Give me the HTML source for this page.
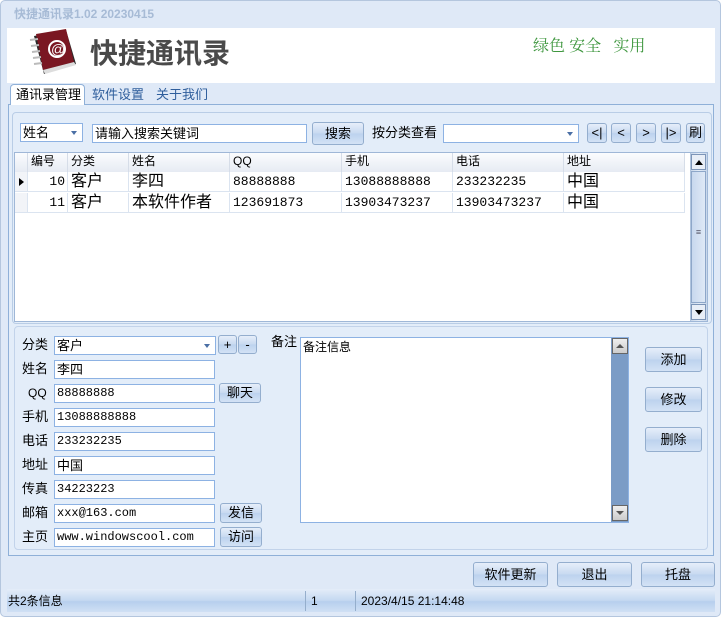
<!DOCTYPE html><html><head><meta charset="utf-8"><style>
*{box-sizing:border-box;margin:0;padding:0}
body{width:722px;height:619px;background:#fff;font-family:"Liberation Sans","Noto Sans CJK SC",sans-serif;font-size:12px;color:#000;position:relative;overflow:hidden}
.a{position:absolute}
.win{left:0;top:0;width:721px;height:617px;background:#dfe9f7;border:1px solid #b4c6de;border-radius:5px}
.inp{position:absolute;background:#fff;border:1px solid #8db2e3;height:19px;font-family:"Liberation Mono","Noto Sans CJK SC",monospace;font-size:12px;line-height:17px;padding-left:2px;white-space:nowrap;overflow:hidden}
.btn{position:absolute;border:1px solid #94aece;border-radius:3px;background:linear-gradient(#e6eefa,#c7d9f0 50%,#bcd2ee 51%,#d3e2f5);text-align:center;font-size:13px;white-space:nowrap}
.lbl{position:absolute;font-size:13px;line-height:16px;white-space:nowrap}
.dd{position:absolute;right:5px;top:7px;width:0;height:0;border-left:3px solid transparent;border-right:3px solid transparent;border-top:4px solid #4a6fa5}
.grid{left:14px;top:152px;width:694px;height:170px;background:#fff;border:1px solid #9fb7d7}
.hc{position:absolute;top:0;height:19px;background:linear-gradient(#fbfcfe,#e6ebf3);border-right:1px solid #d6dde8;font-size:12px;line-height:17px;padding-left:3px}
.c{position:absolute;height:20px;border-right:1px solid #dbe4f0;border-bottom:1px solid #dbe4f0;font-size:16px;line-height:19px;padding-left:3px;white-space:nowrap}
.m{font-family:"Liberation Mono",monospace;font-size:13px}
</style></head><body>
<div class="a win"></div>
<div class="a" style="left:14px;top:5px;font-size:12px;font-weight:bold;color:#a7bbd6">快捷通讯录1.02 20230415</div>
<div class="a" style="left:7px;top:28px;width:708px;height:55px;background:#fff"></div>
<svg class="a" style="left:24px;top:28px" width="58" height="52" viewBox="0 0 58 52">
<path d="M10 8 L42 2 L52 36 L20 46 Z" fill="#2a2a2a"/>
<path d="M12 6 L42 1 L50 34 L19 42 Z" fill="#7a1722"/>
<path d="M19 42 L50 34 L52 37 L21 46 Z" fill="#ddd"/>
<circle cx="33" cy="21" r="8" fill="none" stroke="#fff" stroke-width="2"/><text x="27" y="26" font-size="14" fill="#fff" font-family="Liberation Sans">@</text>
<g stroke="#bbb" stroke-width="2"><line x1="6" y1="12" x2="14" y2="11"/><line x1="7" y1="18" x2="15" y2="17"/><line x1="8" y1="24" x2="16" y2="23"/><line x1="9" y1="30" x2="17" y2="29"/><line x1="10" y1="36" x2="18" y2="35"/></g>
</svg>
<div class="a" style="left:90px;top:36px;font-size:28px;line-height:36px;font-weight:bold;color:#4a4a4a">快捷通讯录</div>
<div class="a" style="left:533px;top:34px;font-size:16px;line-height:22px;color:#3f973f;font-family:'Noto Serif CJK SC',serif;white-space:pre">绿色 安全   实用</div>
<!-- tabs -->
<div class="a" style="left:8px;top:104px;width:706px;height:452px;border:1px solid #8fb0d8;background:#e3edf9"></div>
<div class="a" style="left:10px;top:84px;width:75px;height:21px;background:#fff;border:1px solid #8fb0d8;border-bottom:none;border-radius:4px 4px 0 0;font-size:13px;line-height:16px;padding:2px 0 0 5px">通讯录管理</div>
<div class="lbl" style="left:92px;top:87px;color:#2f5e9c">软件设置</div>
<div class="lbl" style="left:156px;top:87px;color:#2f5e9c">关于我们</div>
<div class="a" style="left:12px;top:112px;width:700px;height:212px;border:1px solid #b9cde6;border-radius:4px"></div>
<div class="inp" style="left:20px;top:123px;width:63px;font-family:'Liberation Sans','Noto Sans CJK SC';font-size:13px">姓名<div class="dd"></div></div>
<div class="inp" style="left:92px;top:124px;width:215px;font-family:'Liberation Sans','Noto Sans CJK SC';font-size:13px">请输入搜索关键词</div>
<div class="btn" style="left:312px;top:122px;width:52px;height:23px;line-height:21px">搜索</div>
<div class="lbl" style="left:372px;top:125px">按分类查看</div>
<div class="inp" style="left:443px;top:124px;width:136px"><div class="dd"></div></div>
<div class="btn" style="left:587px;top:123px;width:20px;height:20px;line-height:18px">&lt;|</div>
<div class="btn" style="left:611px;top:123px;width:20px;height:20px;line-height:18px">&lt;</div>
<div class="btn" style="left:636px;top:123px;width:20px;height:20px;line-height:18px">&gt;</div>
<div class="btn" style="left:661px;top:123px;width:20px;height:20px;line-height:18px">|&gt;</div>
<div class="btn" style="left:686px;top:123px;width:19px;height:20px;line-height:18px">刷</div>
<!-- grid -->
<div class="a grid">
<div class="hc" style="left:0;width:13px;padding:0"></div>
<div class="hc" style="left:13px;width:40px">编号</div>
<div class="hc" style="left:53px;width:61px">分类</div>
<div class="hc" style="left:114px;width:101px">姓名</div>
<div class="hc" style="left:215px;width:112px">QQ</div>
<div class="hc" style="left:327px;width:111px">手机</div>
<div class="hc" style="left:438px;width:111px">电话</div>
<div class="hc" style="left:549px;width:121px">地址</div>
<div class="c" style="left:0;top:19px;width:13px;background:#f2f4f8;padding:0"><div class="a" style="left:4px;top:6px;border-top:4px solid transparent;border-bottom:4px solid transparent;border-left:5px solid #000"></div></div>
<div class="c m" style="left:13px;top:19px;width:40px;text-align:right;padding-right:2px">10</div>
<div class="c" style="left:53px;top:19px;width:61px">客户</div>
<div class="c" style="left:114px;top:19px;width:101px">李四</div>
<div class="c m" style="left:215px;top:19px;width:112px">88888888</div>
<div class="c m" style="left:327px;top:19px;width:111px">13088888888</div>
<div class="c m" style="left:438px;top:19px;width:111px">233232235</div>
<div class="c" style="left:549px;top:19px;width:121px">中国</div>
<div class="c" style="left:0;top:40px;width:13px;background:#f2f4f8;padding:0"></div>
<div class="c m" style="left:13px;top:40px;width:40px;text-align:right;padding-right:2px">11</div>
<div class="c" style="left:53px;top:40px;width:61px">客户</div>
<div class="c" style="left:114px;top:40px;width:101px">本软件作者</div>
<div class="c m" style="left:215px;top:40px;width:112px">123691873</div>
<div class="c m" style="left:327px;top:40px;width:111px">13903473237</div>
<div class="c m" style="left:438px;top:40px;width:111px">13903473237</div>
<div class="c" style="left:549px;top:40px;width:121px">中国</div>
<div class="a" style="left:675px;top:0;width:17px;height:168px;background:linear-gradient(90deg,#c7d6ea,#e3ecf7,#c7d6ea);border-left:1px solid #b0c4de"></div>
<div class="a" style="left:676px;top:1px;width:15px;height:16px;border:1px solid #7d95b8;background:#e8eef7"><div class="a" style="left:3px;top:5px;border-left:4px solid transparent;border-right:4px solid transparent;border-bottom:5px solid #000"></div></div>
<div class="a" style="left:676px;top:18px;width:15px;height:132px;border:1px solid #8ea7c9;background:linear-gradient(90deg,#c8d8ee,#dfe9f6);font-size:9px;text-align:center;line-height:120px;color:#556">≡</div>
<div class="a" style="left:676px;top:151px;width:15px;height:16px;border:1px solid #7d95b8;background:#e8eef7"><div class="a" style="left:3px;top:5px;border-left:4px solid transparent;border-right:4px solid transparent;border-top:5px solid #000"></div></div>
</div>
<!-- lower -->
<div class="a" style="left:14px;top:326px;width:694px;height:224px;border:1px solid #c2d3ea;border-radius:4px"></div>
<div class="lbl" style="left:22px;top:337px">分类</div>
<div class="inp" style="left:54px;top:336px;width:162px;font-family:'Liberation Sans','Noto Sans CJK SC';font-size:13px">客户<div class="dd"></div></div>
<div class="btn" style="left:218px;top:335px;width:19px;height:19px;line-height:17px">+</div>
<div class="btn" style="left:238px;top:335px;width:19px;height:19px;line-height:17px">-</div>
<div class="lbl" style="left:22px;top:361px">姓名</div><div class="inp" style="left:54px;top:360px;width:161px;font-family:'Liberation Sans','Noto Sans CJK SC';font-size:13px">李四</div>
<div class="lbl" style="left:28px;top:385px;font-size:12px">QQ</div><div class="inp" style="left:54px;top:384px;width:161px">88888888</div>
<div class="btn" style="left:219px;top:383px;width:42px;height:20px;line-height:18px">聊天</div>
<div class="lbl" style="left:22px;top:409px">手机</div><div class="inp" style="left:54px;top:408px;width:161px">13088888888</div>
<div class="lbl" style="left:22px;top:433px">电话</div><div class="inp" style="left:54px;top:432px;width:161px">233232235</div>
<div class="lbl" style="left:22px;top:457px">地址</div><div class="inp" style="left:54px;top:456px;width:161px;font-family:'Liberation Sans','Noto Sans CJK SC';font-size:13px">中国</div>
<div class="lbl" style="left:22px;top:481px">传真</div><div class="inp" style="left:54px;top:480px;width:161px">34223223</div>
<div class="lbl" style="left:22px;top:505px">邮箱</div><div class="inp" style="left:54px;top:504px;width:161px">xxx@163.com</div>
<div class="btn" style="left:220px;top:503px;width:42px;height:20px;line-height:18px">发信</div>
<div class="lbl" style="left:22px;top:529px">主页</div><div class="inp" style="left:54px;top:528px;width:161px">www.windowscool.com</div>
<div class="btn" style="left:220px;top:527px;width:42px;height:20px;line-height:18px">访问</div>
<div class="lbl" style="left:271px;top:334px">备注</div>
<div class="a" style="left:300px;top:337px;width:329px;height:186px;background:#fff;border:1px solid #8db2e3;font-size:12px;line-height:15px;padding:2px 2px">备注信息</div>
<div class="a" style="left:611px;top:338px;width:17px;height:184px;background:#7b9cc6"></div>
<div class="a" style="left:612px;top:338px;width:16px;height:16px;border:1px solid #666;background:linear-gradient(#eee,#ccc)"><div class="a" style="left:3px;top:5px;border-left:4px solid transparent;border-right:4px solid transparent;border-bottom:4px solid #555"></div></div>
<div class="a" style="left:612px;top:505px;width:16px;height:16px;border:1px solid #666;background:linear-gradient(#eee,#ccc)"><div class="a" style="left:3px;top:5px;border-left:4px solid transparent;border-right:4px solid transparent;border-top:4px solid #555"></div></div>
<div class="btn" style="left:645px;top:347px;width:57px;height:25px;line-height:23px">添加</div>
<div class="btn" style="left:645px;top:387px;width:57px;height:25px;line-height:23px">修改</div>
<div class="btn" style="left:645px;top:427px;width:57px;height:25px;line-height:23px">删除</div>
<div class="btn" style="left:473px;top:562px;width:75px;height:25px;line-height:23px">软件更新</div>
<div class="btn" style="left:557px;top:562px;width:75px;height:25px;line-height:23px">退出</div>
<div class="btn" style="left:641px;top:562px;width:74px;height:25px;line-height:23px">托盘</div>
<!-- status -->
<div class="a" style="left:7px;top:589px;width:708px;height:23px;background:linear-gradient(#e4edf9,#c4d8f1 50%,#b7cfee 55%,#d0e0f4)"></div>
<div class="a" style="left:305px;top:591px;width:1px;height:20px;background:#95aecc"></div>
<div class="a" style="left:355px;top:591px;width:1px;height:20px;background:#95aecc"></div>
<div class="lbl" style="left:8px;top:593px;font-size:12px">共2条信息</div>
<div class="lbl" style="left:311px;top:593px;font-size:12px">1</div>
<div class="lbl" style="left:361px;top:593px;font-size:12px">2023/4/15 21:14:48</div>
</body></html>
